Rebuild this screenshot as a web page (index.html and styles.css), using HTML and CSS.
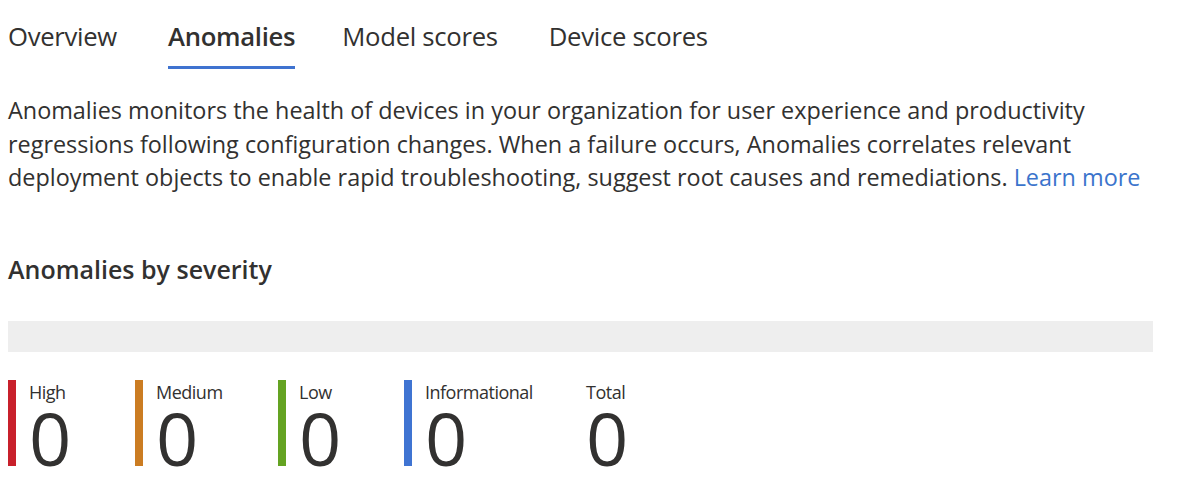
FILE: index.html
```html
<!DOCTYPE html>
<html lang="en">
<head>
<meta charset="utf-8">
<title>Anomalies</title>
<link rel="stylesheet" href="styles.css">
</head>
<body>
<div class="page">
  <nav class="tabs">
    <div class="tab">Overview</div>
    <div class="tab active">Anomalies</div>
    <div class="tab">Model scores</div>
    <div class="tab">Device scores</div>
  </nav>
  <p class="desc">Anomalies monitors the health of devices in your organization for user experience and productivity<br>regressions following configuration changes. When a failure occurs, Anomalies correlates relevant<br>deployment objects to enable rapid troubleshooting, suggest root causes and remediations. <a class="link" href="#">Learn more</a></p>
  <h2 class="heading">Anomalies by severity</h2>
  <div class="bar"></div>
  <div class="stats">
    <div class="stat"><span class="mark red"></span><div class="stat-body"><div class="label">High</div><div class="value">0</div></div></div>
    <div class="stat"><span class="mark orange"></span><div class="stat-body"><div class="label">Medium</div><div class="value">0</div></div></div>
    <div class="stat"><span class="mark green"></span><div class="stat-body"><div class="label">Low</div><div class="value">0</div></div></div>
    <div class="stat"><span class="mark blue"></span><div class="stat-body"><div class="label">Informational</div><div class="value">0</div></div></div>
    <div class="stat total"><div class="stat-body"><div class="label">Total</div><div class="value">0</div></div></div>
  </div>
</div>
</body>
</html>
```
FILE: styles.css
```css
html, body {
  margin: 0;
  padding: 0;
  background: #ffffff;
}
body {
  font-family: "Open Sans", "Noto Sans", sans-serif;
  color: #323130;
}
.page {
  padding: 0 8px;
}
.tabs {
  display: flex;
  height: 69px;
  align-items: stretch;
}
.tab {
  font-size: 25.7px;
  line-height: 74px;
  height: 66px;
  border-bottom: 3px solid transparent;
  color: #323130;
  letter-spacing: -0.3px;
}
.tab:nth-child(1) { margin-right: 51px; }
.tab:nth-child(2) { margin-right: 47px; }
.tab:nth-child(3) { margin-right: 51px; }
.tab.active {
  font-weight: 600;
  border-bottom-color: #3f73d0;
}
.desc {
  margin: 25px 0 0;
  font-size: 23.4px;
  line-height: 33.5px;
  letter-spacing: 0;
}
.link {
  color: #3b74cc;
  text-decoration: none;
}
.heading {
  margin: 57px 0 0;
  font-size: 25px;
  font-weight: 600;
  line-height: 34px;
}
.bar {
  margin-top: 35px;
  width: 1145px;
  height: 31px;
  background: #eeeeee;
}
.stats {
  display: flex;
  margin-top: 28px;
}
.stat {
  display: flex;
  gap: 13px;
}
.stat:nth-child(1) { width: 127px; }
.stat:nth-child(2) { width: 143px; }
.stat:nth-child(3) { width: 126px; }
.stat:nth-child(4) { width: 162px; }
.stat.total { padding-left: 20px; }
.mark {
  width: 8px;
  height: 86px;
}
.red { background: #c8202b; }
.orange { background: #cb7c22; }
.green { background: #64a322; }
.blue { background: #3f74d2; }
.stat-body {
  display: flex;
  flex-direction: column;
}
.label {
  font-size: 18px;
  line-height: 24px;
  letter-spacing: -0.5px;
}
.value {
  font-size: 74px;
  line-height: 62px;
  margin-top: 3px;
}
```
